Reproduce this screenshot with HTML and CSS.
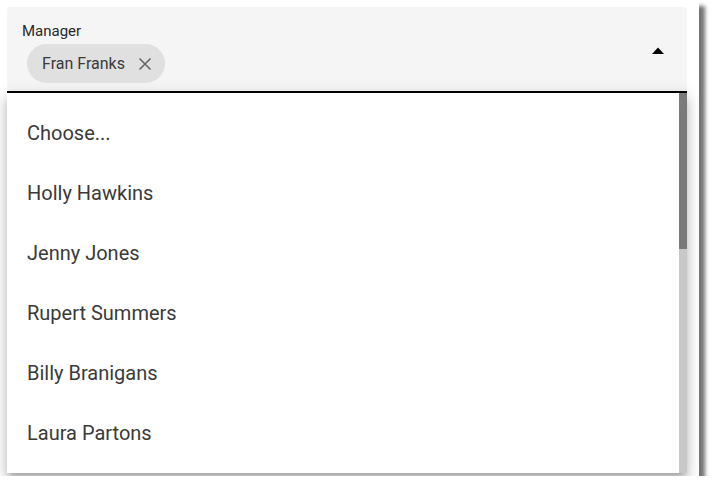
FILE: index.html
```html
<!DOCTYPE html>
<html>
<head>
<meta charset="utf-8">
<link rel="stylesheet" href="styles.css">
</head>
<body>
<div class="frame">
  <div class="field">
    <div class="field-main">
      <div class="label">Manager</div>
      <div class="chip">
        <span class="chip-text">Fran Franks</span>
        <svg class="chip-x" width="14" height="14" viewBox="0 0 14 14"><path d="M1.5 1.5 L12.5 12.5 M12.5 1.5 L1.5 12.5" stroke="#666" stroke-width="1.6" fill="none"/></svg>
      </div>
    </div>
    <svg class="arrow" width="12" height="7" viewBox="0 0 12 7"><path d="M0 7 L6 0.5 L12 7 Z" fill="#000"/></svg>
  </div>
  <div class="menu">
    <ul class="options">
      <li class="option">Choose...</li>
      <li class="option">Holly Hawkins</li>
      <li class="option">Jenny Jones</li>
      <li class="option">Rupert Summers</li>
      <li class="option">Billy Branigans</li>
      <li class="option">Laura Partons</li>
    </ul>
    <div class="scrollbar"><div class="thumb"></div></div>
  </div>
</div>
</body>
</html>
```
FILE: styles.css
```css
html, body {
  margin: 0;
  padding: 0;
  background: #fff;
  font-family: Roboto, "Liberation Sans", sans-serif;
}
.frame {
  width: 699px;
  height: 476px;
  box-sizing: border-box;
  padding: 7px 12px 0 7px;
  background: #fff;
  box-shadow: 6px 6px 4px rgba(0,0,0,0.55);
  overflow: hidden;
}
.field {
  height: 84px;
  background: #f5f5f5;
  border-bottom: 2px solid #000;
  border-radius: 4px 4px 0 0;
  display: flex;
  align-items: flex-start;
  justify-content: space-between;
}
.field-main {
  padding: 15px 0 0 15px;
  display: flex;
  flex-direction: column;
}
.label {
  font-size: 15px;
  line-height: 18px;
  color: #2a2a2a;
  height: 22px;
}
.chip {
  margin-left: 5px;
  height: 39px;
  border-radius: 20px;
  background: #e0e0e0;
  display: flex;
  align-items: center;
  padding: 0 13px 0 15px;
  gap: 13px;
  width: fit-content;
}
.chip-text {
  font-size: 16px;
  color: #3a3a3a;
}
.chip-x {
  display: block;
}
.arrow {
  margin: 40px 23px 0 0;
  display: block;
}
.menu {
  height: 380px;
  display: flex;
  background: #fff;
  box-shadow: 0 5px 5px -3px rgba(0,0,0,.2), 0 8px 10px 1px rgba(0,0,0,.14), 0 3px 14px 2px rgba(0,0,0,.12);
}
.options {
  list-style: none;
  margin: 0;
  padding: 10px 0 0 0;
  flex: 1;
}
.option {
  height: 60px;
  line-height: 60px;
  padding-left: 20px;
  font-size: 20px;
  color: #3a3a3a;
}
.scrollbar {
  width: 8px;
  background: #c8c8c8;
  display: flex;
  flex-direction: column;
}
.thumb {
  height: 156px;
  background: #7a7a7a;
}
```
